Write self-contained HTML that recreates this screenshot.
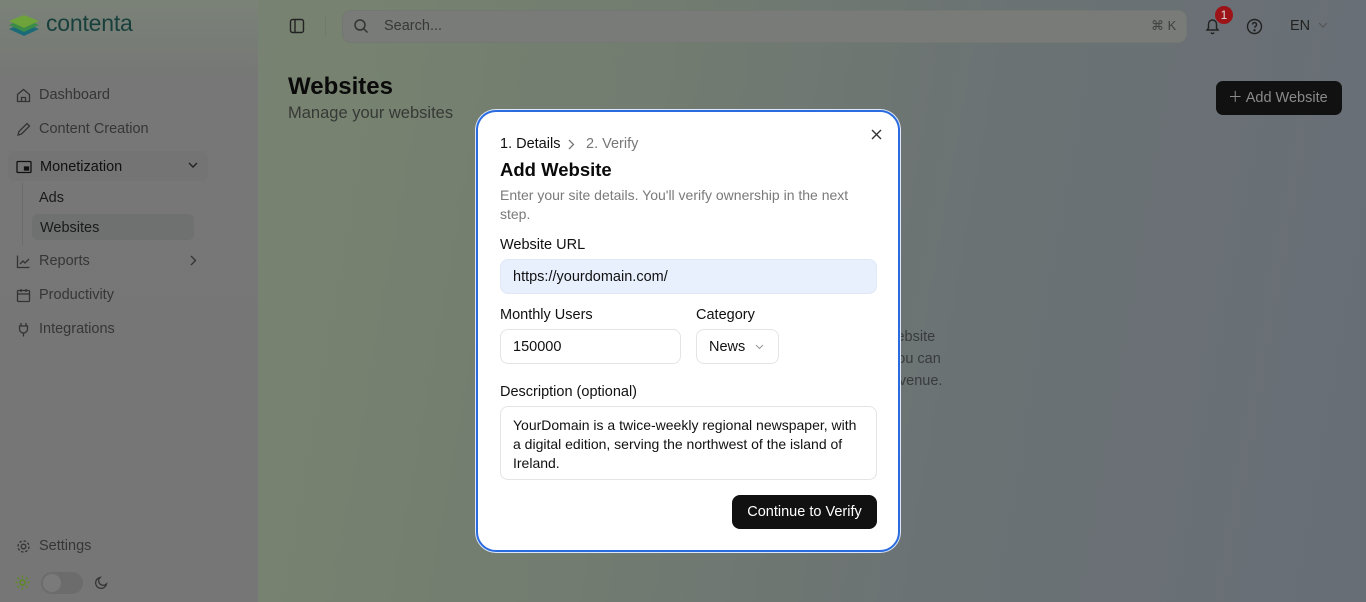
<!DOCTYPE html>
<html><head><meta charset="utf-8">
<style>
*{box-sizing:border-box;margin:0;padding:0}
body{width:1366px;height:602px;overflow:hidden;font-family:"Liberation Sans",sans-serif;position:relative;
background:linear-gradient(100deg,#7b8376 0%,#778270 25%,#727c70 45%,#6b7274 70%,#686e76 100%);}
.side{position:absolute;left:0;top:0;width:258px;height:602px;background:linear-gradient(180deg,#7a8277 0,#767776 80px,#767676 100%)}
.nav{position:absolute;left:16px;display:flex;align-items:center;font-size:14.5px;color:#353635}
.nav svg{margin-right:8px}
.t{position:absolute;white-space:nowrap}
.modal{position:absolute;left:476px;top:110px;width:424px;height:442px;background:#fff;border:2px solid #2a6be0;border-radius:20px;box-shadow:0 0 0 1px #dde7f7}
.lbl{position:absolute;font-size:14.5px;color:#111;left:22px}
.inp{position:absolute;border:1px solid #e4e4e7;border-radius:8px;font-size:14.5px;color:#111;padding-left:12px;display:flex;align-items:center}
</style></head><body>
<div class="side"></div>
<svg class="t" style="left:8px;top:13px" width="32" height="26" viewBox="0 0 32 26">
<path d="M1 16 L16 10 L31 16 L16 23Z" fill="#1b6a78"/>
<path d="M1 12 L16 6 L31 12 L16 19Z" fill="#3a8c48"/>
<path d="M1 8 L16 2 L31 8 L16 15Z" fill="#6ea23a"/>
</svg>
<div class="t" style="left:46px;top:10px;font-size:23px;color:#173f3c;letter-spacing:-0.2px">contenta</div>
<svg class="t" style="left:289px;top:18px" width="16" height="16" viewBox="0 0 16 16" fill="none" stroke="#222" stroke-width="1.4"><rect x="1.5" y="1.5" width="13" height="13" rx="2"/><path d="M6 1.5v13"/></svg>
<div class="t" style="left:325px;top:16px;width:1px;height:20px;background:#727a6e"></div>
<div class="t" style="left:342px;top:10px;width:845px;height:33px;border-radius:9px;background:#797b78;border:1px solid #747872"></div>
<svg class="t" style="left:353px;top:18px" width="16" height="16" viewBox="0 0 16 16" fill="none" stroke="#333" stroke-width="1.5"><circle cx="7" cy="7" r="5"/><path d="M11 11l3.5 3.5"/></svg>
<div class="t" style="left:384px;top:18px;font-size:14.5px;color:#383838">Search...</div>
<div class="t" style="left:1151px;top:18px;font-size:13px;color:#404040">⌘ K</div>
<svg class="t" style="left:1204px;top:17px" width="17" height="18" viewBox="0 0 17 18" fill="none" stroke="#222" stroke-width="1.4"><path d="M3 13h11l-1.5-2V7a4 4 0 0 0-8 0v4z"/><path d="M7 15.5a1.6 1.6 0 0 0 3 0"/></svg>
<div class="t" style="left:1215px;top:6px;width:18px;height:18px;border-radius:9px;background:#9c1418;color:#ddd;font-size:12px;text-align:center;line-height:18px">1</div>
<svg class="t" style="left:1246px;top:18px" width="17" height="17" viewBox="0 0 17 17" fill="none" stroke="#222" stroke-width="1.4"><circle cx="8.5" cy="8.5" r="7"/><path d="M6.5 6.5a2 2 0 1 1 2.5 2v1.3"/><circle cx="8.5" cy="12.3" r=".5" fill="#222"/></svg>
<div class="t" style="left:1290px;top:18px;font-size:14.5px;color:#222">EN</div>
<svg class="t" style="left:1318px;top:22px" width="10" height="7" viewBox="0 0 10 7" fill="none" stroke="#555" stroke-width="1.2"><path d="M1 1l4 4 4-4"/></svg>

<div class="t" style="left:288px;top:73px;font-size:24px;font-weight:bold;color:#0a0a0a">Websites</div>
<div class="t" style="left:288px;top:104px;font-size:16.5px;color:#363936">Manage your websites</div>
<div class="t" style="left:1216px;top:81px;width:126px;height:34px;border-radius:7px;background:#111;color:#8a8a8a;font-size:14.5px;line-height:34px;padding-left:12px">＋ Add Website</div>
<div class="t" style="left:886px;top:326px;font-size:14.5px;color:#383b3e;line-height:22px">website<br>&nbsp;you can<br>revenue.</div>

<div class="nav" style="top:87px"><svg width="15" height="15" viewBox="0 0 15 15" fill="none" stroke="#333" stroke-width="1.3"><path d="M1.5 6.5L7.5 1.5l6 5V13.5h-12z"/><path d="M5.5 13.5v-4h4v4"/></svg>Dashboard</div>
<div class="nav" style="top:121px"><svg width="15" height="15" viewBox="0 0 15 15" fill="none" stroke="#333" stroke-width="1.3"><path d="M2 13l1-3.5 8-8 2.5 2.5-8 8z"/></svg>Content Creation</div>
<div class="t" style="left:8px;top:151px;width:200px;height:30px;border-radius:7px;background:#747474"></div>
<div class="nav" style="top:159px;color:#111"><svg width="16" height="14" viewBox="0 0 16 14" fill="none" stroke="#111" stroke-width="1.3"><rect x="1" y="1.5" width="14" height="11" rx="1"/><rect x="8.5" y="7" width="4" height="3" fill="#111"/></svg>Monetization</div>
<svg class="t" style="left:188px;top:162px" width="10" height="7" viewBox="0 0 10 7" fill="none" stroke="#222" stroke-width="1.4"><path d="M1 1l4 4 4-4"/></svg>
<div class="t" style="left:22px;top:183px;width:1px;height:62px;background:#6b6b6b"></div>
<div class="t" style="left:39px;top:190px;font-size:14.5px;color:#1a1a1a">Ads</div>
<div class="t" style="left:32px;top:214px;width:162px;height:26px;border-radius:6px;background:#6f7070"></div>
<div class="t" style="left:40px;top:220px;font-size:14.5px;color:#1a1a1a">Websites</div>
<div class="nav" style="top:253px"><svg width="15" height="15" viewBox="0 0 15 15" fill="none" stroke="#333" stroke-width="1.3"><path d="M1.5 1.5v12h12"/><path d="M4 10l3-3 2 2 4-4"/></svg>Reports</div>
<svg class="t" style="left:190px;top:255px" width="7" height="11" viewBox="0 0 7 11" fill="none" stroke="#333" stroke-width="1.3"><path d="M1 1l4.5 4.5L1 10"/></svg>
<div class="nav" style="top:287px"><svg width="15" height="15" viewBox="0 0 15 15" fill="none" stroke="#333" stroke-width="1.3"><rect x="1.5" y="2.5" width="12" height="11" rx="1"/><path d="M1.5 6h12M5 1v3M10 1v3"/></svg>Productivity</div>
<div class="nav" style="top:321px"><svg width="15" height="15" viewBox="0 0 15 15" fill="none" stroke="#333" stroke-width="1.3"><path d="M5 1v3M10 1v3M3.5 4h8v3a4 4 0 0 1-8 0z M7.5 11v3.5"/></svg>Integrations</div>
<div class="nav" style="top:538px"><svg width="15" height="15" viewBox="0 0 15 15" fill="none" stroke="#333" stroke-width="1.3"><circle cx="7.5" cy="7.5" r="2.3"/><circle cx="7.5" cy="7.5" r="5.5" stroke-dasharray="2.5 1.8"/></svg>Settings</div>
<svg class="t" style="left:15px;top:575px" width="15" height="15" viewBox="0 0 15 15" fill="none" stroke="#5d8a1c" stroke-width="1.4"><circle cx="7.5" cy="7.5" r="2.5"/><path d="M7.5 0.5v2M7.5 12.5v2M0.5 7.5h2M12.5 7.5h2M2.5 2.5l1.4 1.4M11.1 11.1l1.4 1.4M2.5 12.5l1.4-1.4M11.1 3.9l1.4-1.4"/></svg>
<div class="t" style="left:41px;top:572px;width:42px;height:22px;border-radius:11px;background:#6c6c6c"></div>
<div class="t" style="left:43px;top:574px;width:18px;height:18px;border-radius:9px;background:#7a7a7a"></div>
<svg class="t" style="left:94px;top:575px" width="15" height="15" viewBox="0 0 15 15" fill="none" stroke="#333" stroke-width="1.3"><path d="M12.5 9A5.5 5.5 0 1 1 6 2.5a4.5 4.5 0 0 0 6.5 6.5z"/></svg>

<div class="modal">
<div class="t" style="left:22px;top:24px;font-size:14.5px;color:#111">1. Details</div>
<svg class="t" style="left:90px;top:27px" width="7" height="11" viewBox="0 0 7 11" fill="none" stroke="#777" stroke-width="1.3"><path d="M1 1l4.5 4.5L1 10"/></svg>
<div class="t" style="left:108px;top:24px;font-size:14.5px;color:#777">2. Verify</div>
<svg class="t" style="left:393px;top:17px" width="11" height="11" viewBox="0 0 11 11" stroke="#333" stroke-width="1.4"><path d="M1 1l9 9M10 1l-9 9"/></svg>
<div class="t" style="left:22px;top:47px;font-size:18.5px;font-weight:bold;color:#0a0a0a">Add Website</div>
<div class="t" style="left:22px;top:74px;font-size:14px;color:#7a7a7a;line-height:19px;white-space:normal;width:360px">Enter your site details. You'll verify ownership in the next step.</div>
<div class="lbl" style="top:125px">Website URL</div>
<div class="inp" style="left:22px;top:147px;width:377px;height:35px;background:#e8effd;border-color:#e0e8f6">https://yourdomain.com/</div>
<div class="lbl" style="top:195px">Monthly Users</div>
<div class="lbl" style="top:195px;left:218px">Category</div>
<div class="inp" style="left:22px;top:217px;width:181px;height:35px">150000</div>
<div class="inp" style="left:218px;top:217px;width:83px;height:35px">News<svg style="margin-left:10px" width="9" height="6" viewBox="0 0 9 6" fill="none" stroke="#999" stroke-width="1.1"><path d="M1 1l3.5 3.5L8 1"/></svg></div>
<div class="lbl" style="top:272px">Description (optional)</div>
<div class="inp" style="left:22px;top:294px;width:377px;height:74px;align-items:flex-start;padding-top:9px;line-height:19px;padding-right:14px;font-size:14px">YourDomain is a twice-weekly regional newspaper, with a digital edition, serving the northwest of the island of Ireland.</div>
<div class="t" style="left:254px;top:383px;width:145px;height:34px;border-radius:8px;background:#111;color:#fff;font-size:14.5px;text-align:center;line-height:34px">Continue to Verify</div>
</div>
</body></html>
